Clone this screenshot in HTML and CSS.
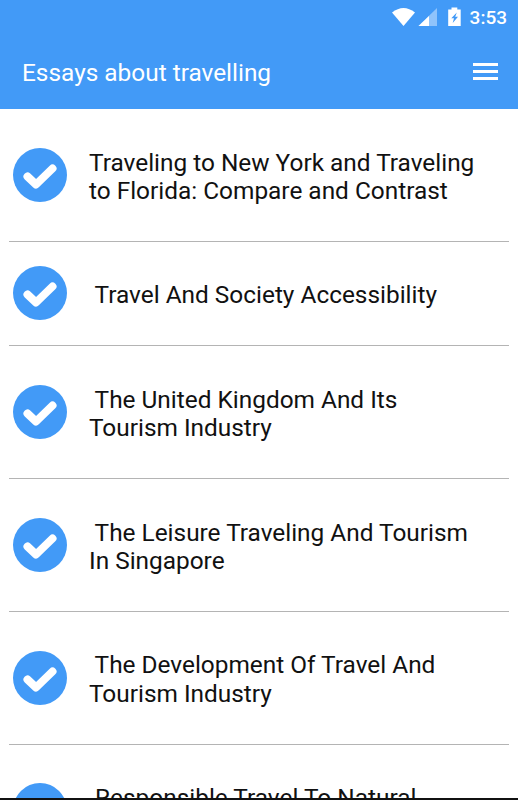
FILE: index.html
```html
<!DOCTYPE html>
<html lang="en">
<head>
<meta charset="utf-8">
<title>Essays about travelling</title>
<link rel="stylesheet" href="styles.css">
</head>
<body>
<svg class="defs" aria-hidden="true">
  <symbol id="check" viewBox="0 0 54 54">
    <circle cx="27" cy="27" r="27" fill="#429af7"/>
    <path d="M14.500 28.500 L23 36.500 L39.500 20.500" fill="none" stroke="#fff" stroke-width="8" stroke-linecap="round" stroke-linejoin="round"/>
  </symbol>
</svg>
<div class="screen">
  <header class="header">
    <div class="status">
      <svg class="status-icons" viewBox="0 0 72 22" aria-hidden="true">
        <path d="M0 5.500 Q11.500 -3.500 23 5.500 L11.500 19 Z" fill="#fff"/>
        <path d="M45 1 V19 H26.500 Z" fill="#8fc3fb"/>
        <path d="M37 9 V19 H26.500 Z" fill="#fff"/>
        <path d="M56.200 2.500 H59.500 V.5 H65.300 V2.500 H68.700 V19 H56.200 Z" fill="#fff"/>
        <path d="M64.800 5.500 L59.300 11.300 H62 L60.700 16 L66 9.800 H63.200 Z" fill="#429af7"/>
      </svg>
      <span class="time">3:53</span>
    </div>
    <div class="toolbar">
      <h1 class="title">Essays about travelling</h1>
      <svg class="menu" viewBox="0 0 25 18" aria-label="Menu"><path d="M0 1.500H25M0 8.500H25M0 15.500H25" stroke="#fff" stroke-width="2.800"/></svg>
    </div>
  </header>
  <main class="list">
    <div class="row"><svg class="check"><use href="#check"/></svg><p class="label">Traveling to New York and Traveling<br>to Florida: Compare and Contrast</p></div>
    <div class="row"><svg class="check"><use href="#check"/></svg><p class="label"> Travel And Society Accessibility</p></div>
    <div class="row"><svg class="check"><use href="#check"/></svg><p class="label"> The United Kingdom And Its<br>Tourism Industry</p></div>
    <div class="row"><svg class="check"><use href="#check"/></svg><p class="label"> The Leisure Traveling And Tourism<br>In Singapore</p></div>
    <div class="row"><svg class="check"><use href="#check"/></svg><p class="label"> The Development Of Travel And<br>Tourism Industry</p></div>
    <div class="row last"><svg class="check"><use href="#check"/></svg><p class="label"> Responsible Travel To Natural</p></div>
  </main>
  <div class="bottom-edge"></div>
</div>
</body>
</html>
```
FILE: styles.css
```css
* { box-sizing: border-box; }
body { margin: 0; font-family: Roboto, "Liberation Sans", sans-serif; background: #fff; }
.defs { display: block; width: 0; height: 0; }
.screen { width: 518px; height: 800px; display: flex; flex-direction: column; overflow: hidden; }
.header { flex: none; height: 109px; background: #429af7; color: #fff; }
.status { height: 36px; display: flex; align-items: center; justify-content: flex-end; padding-right: 11px; }
.status-icons { width: 72px; height: 22px; margin: 0 6px 0 0; }
.time { font-size: 19px; line-height: 22px; font-weight: 500; }
.toolbar { height: 73px; display: flex; align-items: center; justify-content: space-between; padding: 0 20px 0 22px; }
.title { margin: 0; font-size: 24.400px; line-height: 28px; font-weight: 400; }
.menu { width: 25px; height: 18px; margin-top: -1px; }
.list { flex: 1; min-height: 0; overflow: hidden; padding: 0 9px; }
.row { display: flex; align-items: center; padding: 39.500px 0 35.900px 4px; border-bottom: 1px solid #b4b4b4; }
.check { flex: none; width: 54px; height: 54px; margin: -17px 22px -13px 0; }
.label { margin: 0; font-size: 24.400px; line-height: 28.200px; color: #111; white-space: pre; }
.last { border-bottom: 0; }
.last .label { min-height: 56.400px; }
.bottom-edge { flex: none; height: 2px; background: #111; }
```
